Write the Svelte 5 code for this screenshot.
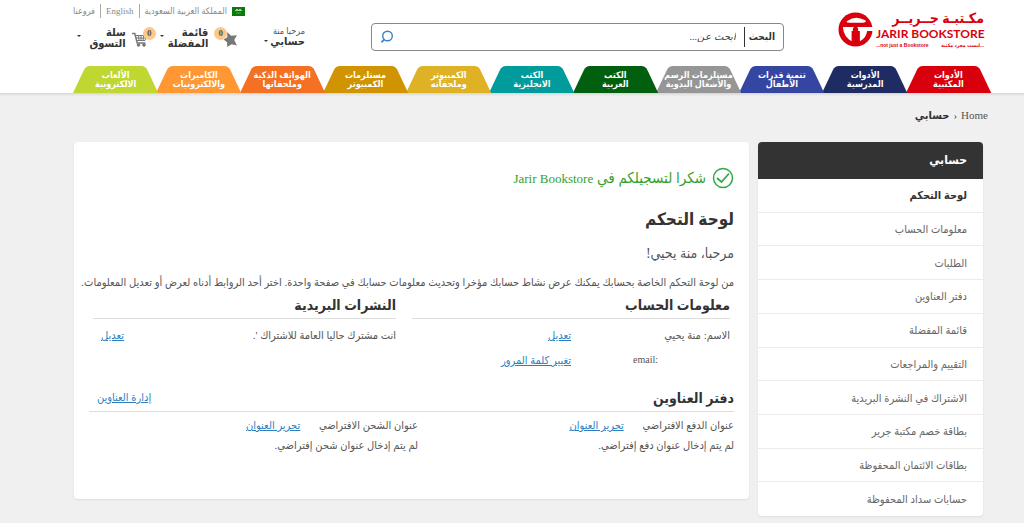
<script lang="ts">
    interface Category {
        lines: string[];
        color: string;
    }

    const categories: Category[] = [
        { lines: ["الأدوات", "المكتبية"], color: "#d9000d" },
        { lines: ["الأدوات", "المدرسية"], color: "#1f2b63" },
        { lines: ["تنمية قدرات", "الأطفال"], color: "#3445a2" },
        { lines: ["مستلزمات الرسم", "والأشغال اليدوية"], color: "#969696" },
        { lines: ["الكتب", "العربية"], color: "#025f10" },
        { lines: ["الكتب", "الانجليزية"], color: "#009b9a" },
        { lines: ["الكمبيوتر", "وملحقاته"], color: "#dfb226" },
        { lines: ["مستلزمات", "الكمبيوتر"], color: "#d09400" },
        { lines: ["الهواتف الذكية", "وملحقاتها"], color: "#f47023" },
        { lines: ["الكاميرات", "والالكترونيات"], color: "#ff9732" },
        { lines: ["الألعاب", "الالكترونية"], color: "#bfd730" },
    ];

    const menu = [
        "لوحة التحكم",
        "معلومات الحساب",
        "الطلبات",
        "دفتر العناوين",
        "قائمة المفضلة",
        "التقييم والمراجعات",
        "الاشتراك في النشرة البريدية",
        "بطاقة خصم مكتبة جرير",
        "بطاقات الائتمان المحفوظة",
        "حسابات سداد المحفوظة",
    ];

    const addresses = [
        { title: "عنوان الدفع الافتراضي", text: "لم يتم إدخال عنوان دفع إفتراضي." },
        { title: "عنوان الشحن الافتراضي", text: "لم يتم إدخال عنوان شحن إفتراضي." },
    ];

    let query = $state("");
</script>

<div class="page" dir="rtl" lang="ar">
    <header>
        <div class="top">
            <a class="logo" href="/">
                <span class="logo-text">
                    <span class="logo-ar">مكـتبـة جــريــر</span>
                    <span class="logo-en">JARIR BOOKSTORE</span>
                    <span class="logo-tag">
                        <span>...ليست مجرد مكتبة</span>
                        <span dir="ltr">...not just a Bookstore</span>
                    </span>
                </span>
                <svg class="logo-mark" viewBox="0 0 36 36">
                    <circle cx="18" cy="18" r="17.5" fill="#d9000d" />
                    <path d="M10 9Q18 3 28 8.500Q30 10.500 26 11H12Q7 11 10 9Z" fill="#fff" />
                    <path d="M5 15.500H36V19.500H30Q29 27 22.500 30V19.500H14V30Q6 26 5 15.500Z" fill="#fff" />
                    <circle cx="18" cy="18" r="2.800" fill="#d9000d" />
                    <path d="M15.500 22H21V30Q20 32 15 31L14 30H15.500Z" fill="#d9000d" />
                </svg>
            </a>

            <form class="search" role="search" onsubmit={(e) => e.preventDefault()}>
                <label for="q">البحث</label>
                <input id="q" type="text" placeholder="ابحث عن..." bind:value={query} />
                <button type="submit" aria-label="البحث">
                    <svg width="14" height="14" viewBox="0 0 14 14" fill="none" stroke="#3b82c8" stroke-width="1.400">
                        <circle cx="7.500" cy="6" r="4.800" />
                        <path d="M4.200 9.500L1.500 12.300" stroke-width="1.800" />
                    </svg>
                </button>
            </form>

            <div class="account">
                <div class="links">
                    <svg width="13" height="9" viewBox="0 0 13 9">
                        <rect width="13" height="9" fill="#0b7a0b" />
                        <path d="M3 3.500H10M4 2.500H6M7 2.500H9" stroke="#cfe6cf" stroke-width=".8" />
                        <path d="M4 6H9" stroke="#7fb97f" stroke-width=".6" />
                    </svg>
                    <a href="/">المملكة العربية السعودية</a>
                    <a href="/">English</a>
                    <a href="/">فروعنا</a>
                </div>
                <div class="tools">
                    <button class="tool">
                        <span class="label"><small>مرحبا منة</small>حسابي</span>
                        <i class="caret near"></i>
                    </button>
                    <button class="tool wishlist">
                        <span class="icon">
                            <svg width="15" height="15" viewBox="0 0 13 14">
                                <path d="M3.500 0L7 3.500L12.500 3L10 7.500L12.500 12.500L7.500 11.500L3.500 14L3.300 9.500L0 7L3.500 5Z" fill="#777" />
                            </svg>
                            <span class="badge">0</span>
                        </span>
                        <span class="label">قائمة<br />المفضلة</span>
                        <i class="caret"></i>
                    </button>
                    <button class="tool">
                        <span class="icon">
                            <span class="badge">0</span>
                            <svg width="15" height="15" viewBox="0 0 15 15" fill="none" stroke="#777">
                                <path d="M0 1.500H2.800L5.200 11H13.500" stroke-width="1.500" />
                                <path d="M3.500 3.500H14.500L13 8.500H4.800M4 6H14M6.500 3.500L7 8.500M9 3.500V8.500M11.700 3.500L11 8.500" />
                                <circle cx="6.500" cy="13" r="1.300" fill="#777" />
                                <circle cx="12" cy="13" r="1.300" fill="#777" />
                            </svg>
                        </span>
                        <span class="label">سلة<br />التسوق</span>
                        <i class="caret far"></i>
                    </button>
                </div>
            </div>
        </div>

        <nav class="categories">
            {#each categories as category}
                <a href="/">
                    <svg viewBox="0 0 86 27" preserveAspectRatio="none">
                        <path
                            d="M0 27L11 4Q13 0 17 0H69Q73 0 75 4L86 27Z"
                            fill={category.color}
                        />
                    </svg>
                    <span>{category.lines[0]}<br />{category.lines[1]}</span>
                </a>
            {/each}
        </nav>
    </header>

    <nav class="breadcrumb">
        <a href="/">Home</a>
        <span>‹</span>
        <strong>حسابي</strong>
    </nav>

    <div class="columns">
        <aside>
            <h2>حسابي</h2>
            <ul>
                {#each menu as item, i}
                    <li class:current={i === 0}><a href="/">{item}</a></li>
                {/each}
            </ul>
        </aside>

        <main>
            <p class="success">
                <svg width="22" height="22" viewBox="0 0 22 22" fill="none" stroke="#35a847">
                    <circle cx="11" cy="11" r="9.500" stroke-width="1.500" />
                    <path d="M5 11L9.500 15L17 6.500" stroke-width="1.800" />
                </svg>
                <span>شكرا لتسجيلكم في <span class="store">Jarir Bookstore</span></span>
            </p>
            <h1>لوحة التحكم</h1>
            <p class="hello">مرحبا، منة يحيي!</p>
            <p class="intro">
                من لوحة التحكم الخاصة بحسابك يمكنك عرض نشاط حسابك مؤخرا وتحديث معلومات حسابك في
                صفحة واحدة. اختر أحد الروابط أدناه لعرض أو تعديل المعلومات.
            </p>

            <div class="boxes">
                <section>
                    <h3>معلومات الحساب</h3>
                    <div class="info">
                        <span>الاسم: منة يحيي</span>
                        <a href="/">تعديل</a>
                        <span class="email" dir="ltr">email:</span>
                        <a href="/">تغيير كلمة المرور</a>
                    </div>
                </section>
                <section>
                    <h3>النشرات البريدية</h3>
                    <div class="news">
                        <span>انت مشترك حاليا العامة للاشتراك '.</span>
                        <a href="/">تعديل</a>
                    </div>
                </section>
            </div>

            <section class="book">
                <div class="book-head">
                    <h3>دفتر العناوين</h3>
                    <a href="/">إدارة العناوين</a>
                </div>
                <div class="addresses">
                    {#each addresses as address}
                        <div>
                            <p>{address.title} <a href="/">تحرير العنوان</a></p>
                            <p>{address.text}</p>
                        </div>
                    {/each}
                </div>
            </section>
        </main>
    </div>
</div>

<style>
    :global(body) {
        background: #f0f0f0;
    }

    .page {
        font-family: "Liberation Serif", "DejaVu Sans Condensed", "DejaVu Sans", sans-serif;
        font-size: 11px;
        line-height: 20px;
        color: #555;
    }

    h1,
    h2,
    h3,
    p,
    ul {
        margin: 0;
        padding: 0;
    }

    a {
        color: inherit;
        text-decoration: none;
    }

    button,
    input {
        font: inherit;
        color: inherit;
        background: none;
        border: 0;
        padding: 0;
    }

    svg {
        display: block;
        flex: none;
    }

    header {
        background: #fff;
        border-bottom: 1px solid #d8d8d8;
        box-shadow: 0 1px 2px #ddd;
    }

    .top {
        display: flex;
        align-items: flex-start;
        height: 66px;
        padding: 0 40px 0 73px;
        box-sizing: border-box;
    }

    .logo {
        display: flex;
        gap: 3px;
        width: 146px;
        padding-top: 12px;
        color: #d9000d;
    }

    .logo-mark {
        width: 35px;
        height: 35px;
    }

    .logo-text {
        display: flex;
        flex-direction: column;
        width: 108px;
        white-space: nowrap;
    }

    .logo-ar {
        font-size: 14px;
        font-weight: bold;
        line-height: 14px;
    }

    .logo-en {
        font-family: Lato, sans-serif;
        font-size: 12px;
        font-weight: bold;
        line-height: 16px;
        direction: ltr;
    }

    .logo-tag {
        display: flex;
        justify-content: space-between;
        font-family: "Liberation Sans", "DejaVu Sans Condensed", sans-serif;
        font-size: 5px;
        font-weight: bold;
        line-height: 6px;
    }

    .search {
        display: flex;
        flex: 1;
        align-items: center;
        height: 28px;
        margin: 23px 54px 0 66px;
        padding: 0 8px;
        box-sizing: border-box;
        border: 1px solid #888;
        border-radius: 4px;
        background: #fff;
    }

    .search label {
        padding-left: 4px;
        border-left: 1px solid #333;
        font-size: 10px;
        font-weight: bold;
        color: #333;
    }

    .search input {
        flex: 1;
        min-width: 0;
        padding: 0 8px;
        font-size: 10px;
        font-style: italic;
        outline: none;
    }

    .search input::placeholder {
        color: #444;
        opacity: 1;
    }

    .account {
        width: 232px;
        padding-top: 4px;
    }

    .links {
        display: flex;
        justify-content: flex-end;
        align-items: center;
        height: 14px;
        font-size: 9px;
        line-height: 14px;
        color: #888;
        white-space: nowrap;
    }

    .links a {
        padding: 0 5px;
    }

    .links a + a {
        border-right: 1px solid #aaa;
    }

    .links a:last-child {
        padding-left: 0;
    }

    .tools {
        display: flex;
        padding-top: 9px;
    }

    .tool {
        display: flex;
        align-items: flex-start;
        text-align: right;
        white-space: nowrap;
    }

    .wishlist {
        margin: 0 26px 0 4px;
    }

    .label {
        font-size: 11px;
        font-weight: bold;
        line-height: 11px;
        color: #333;
    }

    .label small {
        display: block;
        font-size: 9px;
        font-weight: normal;
        line-height: 9px;
        color: #555;
    }

    .icon {
        display: flex;
        padding: 5px 0 0 6px;
    }

    .badge {
        z-index: 1;
        width: 13px;
        height: 13px;
        margin: -5px -4px 0 0;
        border-radius: 50%;
        background: #fcc98a;
        font-size: 9px;
        font-weight: bold;
        line-height: 13px;
        text-align: center;
        color: #555;
    }

    .badge:first-child {
        margin: -5px 0 0 -4px;
    }

    .caret {
        margin: 8px 4px 0 0;
        border: 2px solid transparent;
        border-top-color: #333;
    }

    .near {
        margin: 13px 2px 0 0;
    }

    .far {
        margin-right: 8px;
    }

    .categories {
        display: grid;
        grid-template-columns: repeat(11, 1fr);
        padding: 0 34px 0 74px;
    }

    .categories a {
        display: grid;
        height: 27px;
        margin: 0 -1px;
    }

    .categories svg,
    .categories span {
        grid-area: 1 / 1;
        width: 100%;
        height: 27px;
    }

    .categories span {
        padding-top: 5px;
        box-sizing: border-box;
        font-size: 9px;
        font-weight: bold;
        line-height: 9px;
        text-align: center;
        white-space: nowrap;
        color: #fff;
    }

    .breadcrumb {
        display: flex;
        gap: 4px;
        padding: 11px 36px 17px;
    }

    .breadcrumb strong {
        color: #333;
    }

    .columns {
        display: flex;
        align-items: flex-start;
        gap: 9px;
        padding: 0 41px 8px 74px;
    }

    aside {
        width: 225px;
        overflow: hidden;
        border-radius: 4px;
        background: #fff;
        box-shadow: 0 1px 2px #ddd;
    }

    aside h2 {
        padding: 0 16px;
        background: #333;
        font-size: 12px;
        line-height: 37px;
        color: #fff;
    }

    aside ul {
        display: grid;
        grid-auto-rows: 1fr;
        min-height: 337px;
        list-style: none;
    }

    aside li {
        display: flex;
        align-items: center;
        padding: 0 16px;
        border-bottom: 1px solid #ebebeb;
        color: #666;
    }

    aside li:last-child {
        border-bottom: 0;
    }

    aside .current {
        font-weight: bold;
        color: #333;
    }

    main {
        flex: 1;
        min-width: 0;
        min-height: 357px;
        padding: 24px 15px 0;
        box-sizing: border-box;
        border-radius: 4px;
        background: #fff;
        box-shadow: 0 1px 2px #ddd;
    }

    .success {
        display: flex;
        align-items: center;
        gap: 6px;
        height: 24px;
        font-size: 15px;
        color: #35a02f;
    }

    .store {
        font-size: 13px;
    }

    h1 {
        margin-top: 18px;
        font-size: 17px;
        line-height: 24px;
        color: #333;
    }

    .hello {
        margin-top: 10px;
        font-size: 14px;
        line-height: 24px;
    }

    .intro {
        margin-top: 6px;
        white-space: nowrap;
    }

    .boxes {
        display: grid;
        grid-template-columns: 318px 1fr;
        gap: 16px;
        padding: 2px 4px 0;
    }

    h3 {
        font-size: 14px;
        line-height: 24px;
        color: #333;
    }

    .boxes h3 {
        border-bottom: 1px solid #ddd;
    }

    .info {
        display: grid;
        grid-template-columns: 1fr 1fr;
        row-gap: 5px;
        padding-top: 6px;
    }

    .news {
        display: flex;
        justify-content: space-between;
        padding: 6px 0 0 8px;
    }

    .info a,
    .news a,
    .book a {
        color: #2b7fc0;
        text-decoration: underline;
    }

    .email {
        padding-left: 62px;
        font-size: 10px;
    }

    .book {
        margin-top: 17px;
    }

    .book-head {
        display: flex;
        justify-content: space-between;
        padding-left: 8px;
        border-bottom: 1px solid #ddd;
    }

    .addresses {
        display: grid;
        grid-template-columns: 316px 1fr;
        padding-top: 3px;
    }

    .addresses a {
        margin-right: 16px;
    }
</style>
